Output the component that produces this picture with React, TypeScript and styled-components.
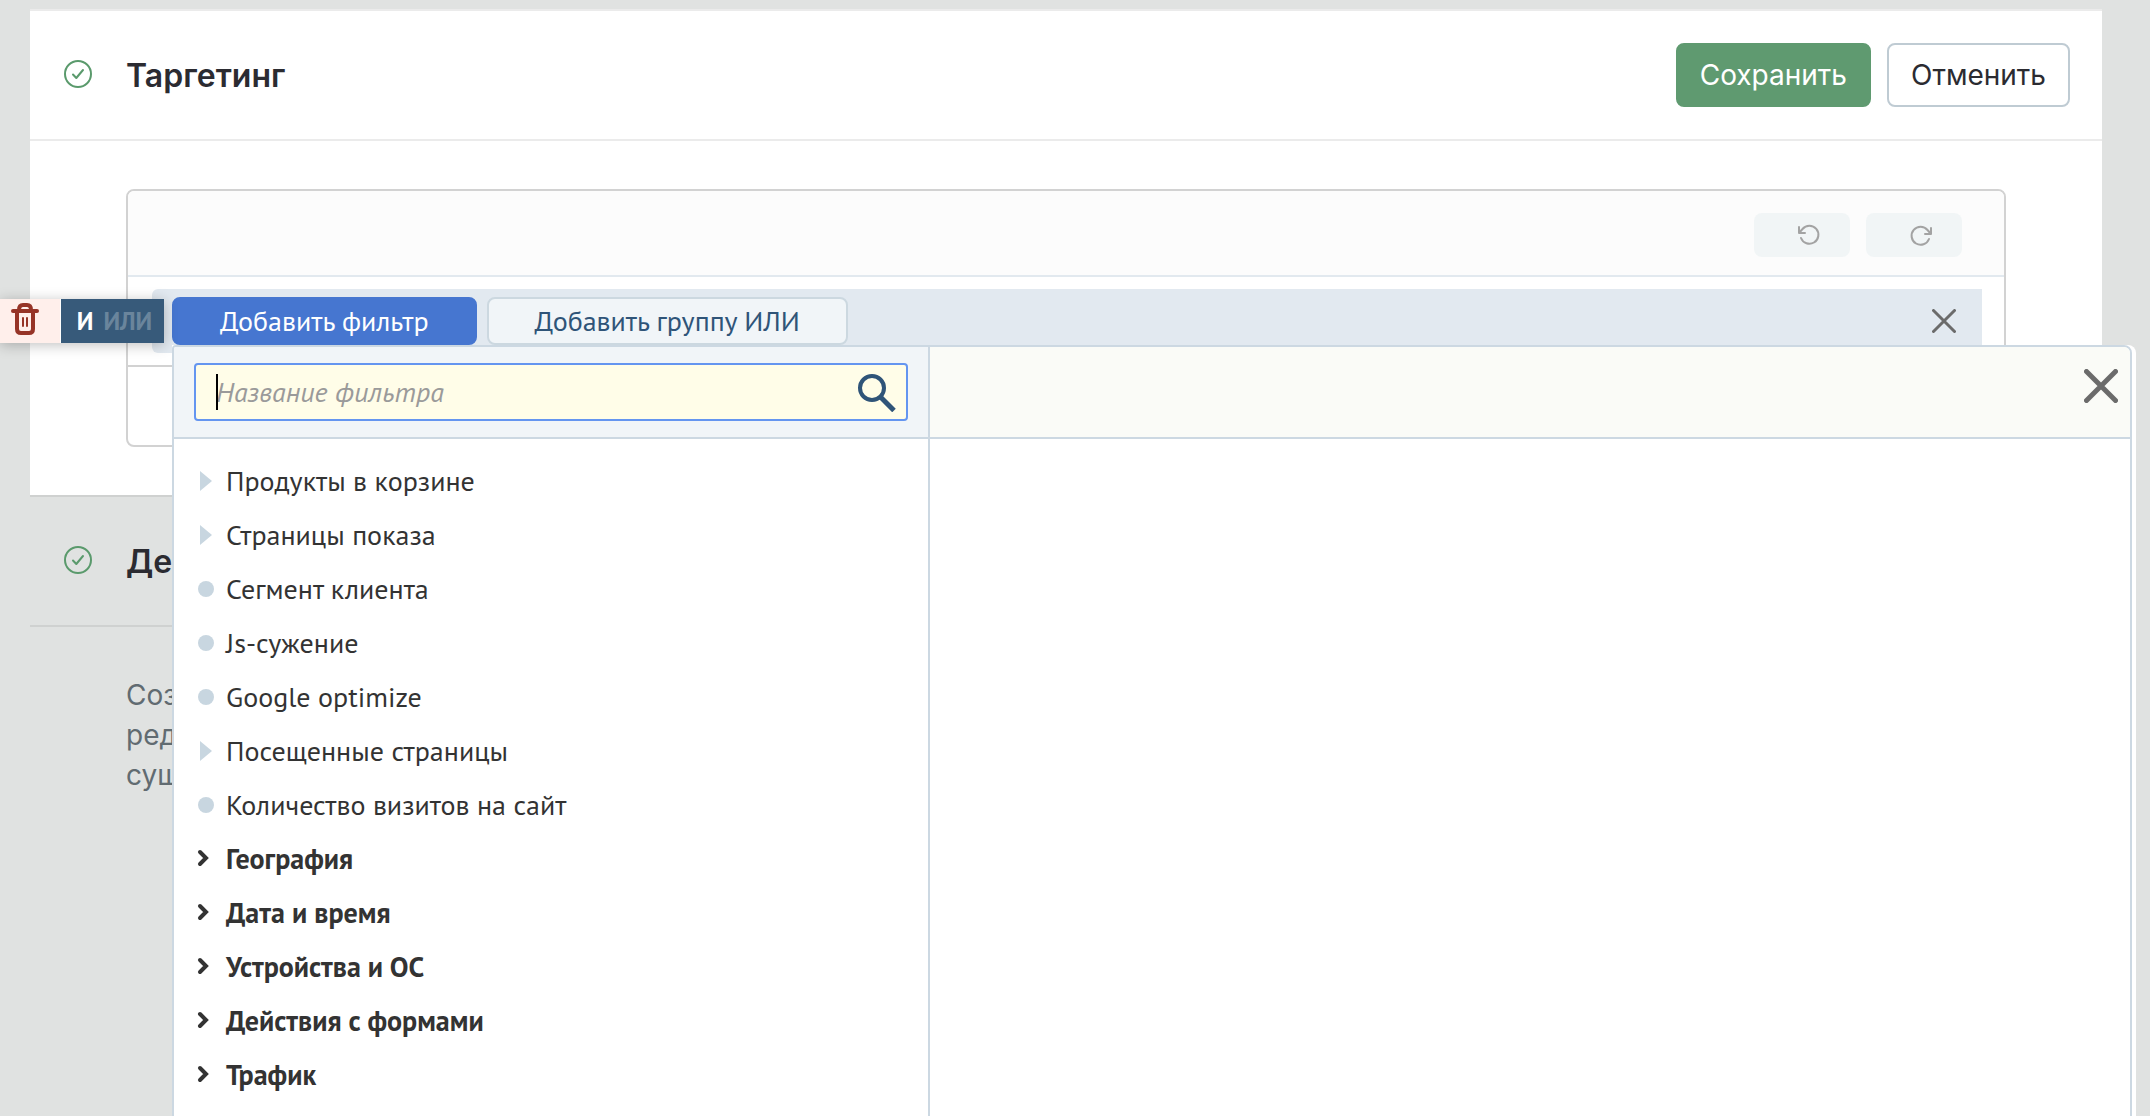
import React, { useState } from "react";
import styled, { createGlobalStyle, css } from "styled-components";

const UI_FONT = `Inter, "Liberation Sans", sans-serif`;
const FILTER_FONT = `"PT Sans", "Noto Sans", "Open Sans", sans-serif`;

const GlobalStyle = createGlobalStyle`
  *, *::before, *::after { box-sizing: border-box; }
  body { margin: 0; background: #e0e2e1; }
  button, input { font: inherit; color: inherit; }
`;

const Page = styled.main`
  min-height: 100vh;
  padding: 9px 48px 0 30px;
  overflow: hidden;
  background: #e0e2e1;
  color: #2b2b31;
  font-family: ${UI_FONT};
  font-size: 28px;
  line-height: 40px;
`;

const Section = styled.section<{ $active?: boolean }>`
  --line: ${({ $active }) => ($active ? "#ebebeb" : "#cfd1d0")};
  border-top: 2px solid var(--line);
  background: ${({ $active }) => ($active ? "#fff" : "transparent")};
`;

const SectionHeader = styled.header`
  display: flex;
  align-items: center;
  height: 130px;
  padding: 0 32px 0 34px;
  border-bottom: 2px solid var(--line);
`;

const StatusIcon = styled.svg`
  width: 28px;
  height: 28px;
  margin-bottom: 2px;
  flex: none;
`;

const Title = styled.h2`
  flex: 1;
  margin: 0 0 0 34px;
  padding-top: 2px;
  font-size: 32px;
  font-weight: 600;
  line-height: 40px;
`;

const Actions = styled.div`
  display: flex;
  gap: 16px;
`;

const ActionButton = styled.button<{ $primary?: boolean }>`
  height: 64px;
  padding: 0 22px;
  border: 2px solid ${({ $primary }) => ($primary ? "#5f9a70" : "#bfcbd3")};
  border-radius: 8px;
  background: ${({ $primary }) => ($primary ? "#5f9a70" : "#fff")};
  color: ${({ $primary }) => ($primary ? "#fff" : "#2b2b31")};
  cursor: pointer;
`;

const SectionBody = styled.div`
  padding: 48px 96px;
`;

const Description = styled.p`
  width: 64px;
  margin: 0;
  color: #616b71;
`;

const Panel = styled.div`
  border: 2px solid #d2d2d2;
  border-radius: 8px;
`;

const PanelToolbar = styled.div`
  display: flex;
  justify-content: flex-end;
  gap: 16px;
  padding: 22px 42px 18px;
  border-bottom: 2px solid #e2e9ef;
  border-radius: 6px 6px 0 0;
  background: #fcfcfc;
`;

const HistoryButton = styled.button`
  display: flex;
  align-items: center;
  justify-content: center;
  width: 96px;
  height: 44px;
  padding: 0 0 0 14px;
  border: 0;
  border-radius: 8px;
  background: #f1f5f6;
  color: #a3a3a3;
`;

const PanelContent = styled.div`
  padding: 12px 22px 12px 24px;
  border-bottom: 2px solid #d2d2d2;
`;

const PanelFooter = styled.div`
  height: 78px;
`;

const FilterGroup = styled.div`
  position: relative;
  display: flex;
  align-items: flex-start;
  gap: 10px;
  height: 64px;
  padding: 8px 26px 8px 20px;
  border-radius: 6px 0 0 6px;
  background: #e2e9f0;
  font-family: ${FILTER_FONT};
`;

const filterButtonColors = {
  primary: css`
    border-color: #4676d0;
    background: #4676d0;
    color: #fff;
  `,
  secondary: css`
    border-color: #ccd8e0;
    background: #f1f5f8;
    color: #2f5478;
  `,
};

const FilterButton = styled.button<{ $kind: "primary" | "secondary" }>`
  height: 48px;
  padding: 0 46px;
  border: 2px solid;
  border-radius: 8px;
  line-height: 40px;
  cursor: pointer;
  ${({ $kind }) => filterButtonColors[$kind]}
`;

const IconButton = styled.button`
  display: flex;
  padding: 0;
  border: 0;
  background: none;
  color: #6b6b6b;
  cursor: pointer;
`;

const RemoveGroup = styled(IconButton)`
  margin: 12px 0 0 auto;
`;

const GroupControls = styled.div`
  position: absolute;
  top: 10px;
  left: -152px;
  display: flex;
  gap: 1px;
  width: 164px;
  height: 44px;
  background: #fff;
  box-shadow: 0 2px 14px rgba(0, 0, 0, 0.25);
`;

const DeleteButton = styled.button`
  display: flex;
  width: 60px;
  padding: 4px 0 0 11px;
  border: 0;
  background: #ffefeb;
  color: #963427;
`;

const LogicToggle = styled.div`
  display: flex;
  flex: 1;
  align-items: center;
  justify-content: center;
  gap: 10px;
  padding-left: 4px;
  background: #375a7a;
`;

const LogicOption = styled.button<{ $on: boolean }>`
  padding: 0;
  border: 0;
  background: none;
  color: ${({ $on }) => ($on ? "#fff" : "#6a859c")};
  font-size: 25px;
  font-weight: 700;
`;

const Popup = styled.div`
  position: absolute;
  top: 56px;
  left: 20px;
  right: -154px;
  min-height: 800px;
  display: flex;
  padding-right: 4px;
  border-radius: 0 8px 0 0;
  background: #fff;
  color: #333;
`;

const PopupFrame = styled.div`
  display: flex;
  flex: 1;
  border: 2px solid #ccd8e2;
  border-radius: 4px 8px 0 0;
  overflow: hidden;
`;

const FilterColumn = styled.div`
  flex: none;
  width: 756px;
  border-right: 2px solid #ccd8e2;
`;

const DetailColumn = styled.div`
  flex: 1;
`;

const PopupHeader = styled.div<{ $search?: boolean }>`
  display: flex;
  justify-content: flex-end;
  height: 92px;
  padding: ${({ $search }) => ($search ? "16px 20px" : "22px 12px")};
  border-bottom: 2px solid #ccd8e2;
  background: ${({ $search }) => ($search ? "#f1f5f8" : "#fafbf7")};
`;

const SearchBox = styled.label`
  position: relative;
  display: flex;
  flex: 1;
  align-items: center;
  padding: 0 10px 0 20px;
  border: 2px solid #6495f0;
  border-radius: 4px;
  background: #fffde8;
  color: #2f5478;
`;

const Caret = styled.span`
  position: absolute;
  left: 20px;
  width: 2px;
  height: 36px;
  background: #000;
`;

const SearchInput = styled.input`
  flex: 1;
  min-width: 0;
  height: 40px;
  padding: 0;
  border: 0;
  outline: 0;
  background: none;
  color: #333;
  caret-color: transparent;

  &::placeholder {
    color: #9a9a9a;
    font-style: italic;
    opacity: 1;
  }
`;

const FilterList = styled.ul`
  margin: 0;
  padding: 15px 20px;
  list-style: none;
`;

const FilterItem = styled.button<{ $bold: boolean }>`
  display: grid;
  grid-template-columns: 32px 1fr;
  align-items: center;
  width: 100%;
  height: 54px;
  padding: 0;
  border: 0;
  background: none;
  text-align: left;
  font-weight: ${({ $bold }) => ($bold ? 700 : 400)};
  cursor: pointer;
`;

type Mark = "arrow" | "dot" | "chevron";

function ItemMark({ mark }: { mark: Mark }) {
  return (
    <svg width="24" height="24" viewBox="0 0 24 24" aria-hidden="true">
      {mark === "arrow" && <path d="M6 2 L18 12 L6 22 Z" fill="#c8d6e0" />}
      {mark === "dot" && <circle cx="12" cy="12" r="8" fill="#c8d6e0" />}
      {mark === "chevron" && (
        <path d="M6 5 L12 11 L6 17" fill="none" stroke="#333" strokeWidth="4" strokeLinecap="round" />
      )}
    </svg>
  );
}

function Done() {
  return (
    <StatusIcon viewBox="0 0 28 28" fill="none" stroke="#5a9a6c" strokeWidth="2" strokeLinecap="round" strokeLinejoin="round" aria-hidden="true">
      <circle cx="14" cy="14" r="13" />
      <path d="M9 14.5 L12.3 18 L19 10" />
    </StatusIcon>
  );
}

function Cross({ size, stroke }: { size: number; stroke: number }) {
  const a = stroke / 2;
  const b = size - a;
  return (
    <svg width={size} height={size} viewBox={`0 0 ${size} ${size}`} stroke="currentColor" strokeWidth={stroke} strokeLinecap="round" aria-hidden="true">
      <path d={`M${a} ${a} L${b} ${b} M${b} ${a} L${a} ${b}`} />
    </svg>
  );
}

function TurnArrow({ forward }: { forward?: boolean }) {
  return (
    <svg width="24" height="24" viewBox="0 0 24 24" fill="none" stroke="currentColor" strokeWidth="2" strokeLinecap="round" strokeLinejoin="round" aria-hidden="true">
      {forward ? (
        <path d="M22 5 V11 H16 M22 11 L18.5 7 A9 9 0 1 0 20 16" />
      ) : (
        <path d="M2 4 V10 H8 M2 10 L5.5 6 A9 9 0 1 1 4 15" />
      )}
    </svg>
  );
}

function Trash() {
  return (
    <svg width="28" height="32" viewBox="0 0 28 32" fill="none" stroke="currentColor" strokeLinecap="round" strokeLinejoin="round" aria-hidden="true">
      <path d="M2 8 H26" strokeWidth="4" />
      <path d="M8 7 C8 3.5 9.5 2 12 2 H16 C18.5 2 20 3.5 20 7" strokeWidth="4" />
      <path d="M6 9 V26 Q6 30 10 30 H18 Q22 30 22 26 V9" strokeWidth="4" />
      <path d="M12 15 V23 M16 15 V23" strokeWidth="2" />
    </svg>
  );
}

function SearchIcon() {
  return (
    <svg width="40" height="40" viewBox="0 0 40 40" fill="none" stroke="currentColor" strokeWidth="4" aria-hidden="true">
      <circle cx="16" cy="16" r="12" />
      <path d="M24.5 25 L38 38.5" strokeWidth="5" />
    </svg>
  );
}

const filters: { label: string; mark: Mark }[] = [
  { label: "Продукты в корзине", mark: "arrow" },
  { label: "Страницы показа", mark: "arrow" },
  { label: "Сегмент клиента", mark: "dot" },
  { label: "Js-сужение", mark: "dot" },
  { label: "Google optimize", mark: "dot" },
  { label: "Посещенные страницы", mark: "arrow" },
  { label: "Количество визитов на сайт", mark: "dot" },
  { label: "География", mark: "chevron" },
  { label: "Дата и время", mark: "chevron" },
  { label: "Устройства и ОС", mark: "chevron" },
  { label: "Действия с формами", mark: "chevron" },
  { label: "Трафик", mark: "chevron" },
];

export default function App() {
  const [query, setQuery] = useState("");
  const [logic, setLogic] = useState("И");

  return (
    <>
      <GlobalStyle />
      <Page>
        <Section $active>
          <SectionHeader>
            <Done />
            <Title>Таргетинг</Title>
            <Actions>
              <ActionButton type="button" $primary>Сохранить</ActionButton>
              <ActionButton type="button">Отменить</ActionButton>
            </Actions>
          </SectionHeader>
          <SectionBody>
            <Panel>
              <PanelToolbar>
                <HistoryButton type="button" aria-label="Отменить действие" disabled>
                  <TurnArrow />
                </HistoryButton>
                <HistoryButton type="button" aria-label="Повторить действие" disabled>
                  <TurnArrow forward />
                </HistoryButton>
              </PanelToolbar>
              <PanelContent>
                <FilterGroup>
                  <FilterButton type="button" $kind="primary">Добавить фильтр</FilterButton>
                  <FilterButton type="button" $kind="secondary">Добавить группу ИЛИ</FilterButton>
                  <RemoveGroup type="button" aria-label="Удалить группу">
                    <Cross size={24} stroke={3} />
                  </RemoveGroup>
                  <GroupControls>
                    <DeleteButton type="button" aria-label="Удалить">
                      <Trash />
                    </DeleteButton>
                    <LogicToggle>
                      {["И", "ИЛИ"].map((name) => (
                        <LogicOption key={name} type="button" $on={logic === name} onClick={() => setLogic(name)}>
                          {name}
                        </LogicOption>
                      ))}
                    </LogicToggle>
                  </GroupControls>
                  <Popup>
                    <PopupFrame>
                      <FilterColumn>
                        <PopupHeader $search>
                          <SearchBox>
                            {query === "" && <Caret />}
                            <SearchInput
                              aria-label="Название фильтра"
                              placeholder="Название фильтра"
                              value={query}
                              onChange={(event) => setQuery(event.target.value)}
                            />
                            <SearchIcon />
                          </SearchBox>
                        </PopupHeader>
                        <FilterList>
                          {filters.map(({ label, mark }) => (
                            <li key={label}>
                              <FilterItem type="button" $bold={mark === "chevron"}>
                                <ItemMark mark={mark} />
                                {label}
                              </FilterItem>
                            </li>
                          ))}
                        </FilterList>
                      </FilterColumn>
                      <DetailColumn>
                        <PopupHeader>
                          <IconButton type="button" aria-label="Закрыть">
                            <Cross size={34} stroke={5} />
                          </IconButton>
                        </PopupHeader>
                      </DetailColumn>
                    </PopupFrame>
                  </Popup>
                </FilterGroup>
              </PanelContent>
              <PanelFooter />
            </Panel>
          </SectionBody>
        </Section>
        <Section>
          <SectionHeader>
            <Done />
            <Title>Дей</Title>
          </SectionHeader>
          <SectionBody>
            <Description>Соз ред сущ</Description>
          </SectionBody>
        </Section>
      </Page>
    </>
  );
}
